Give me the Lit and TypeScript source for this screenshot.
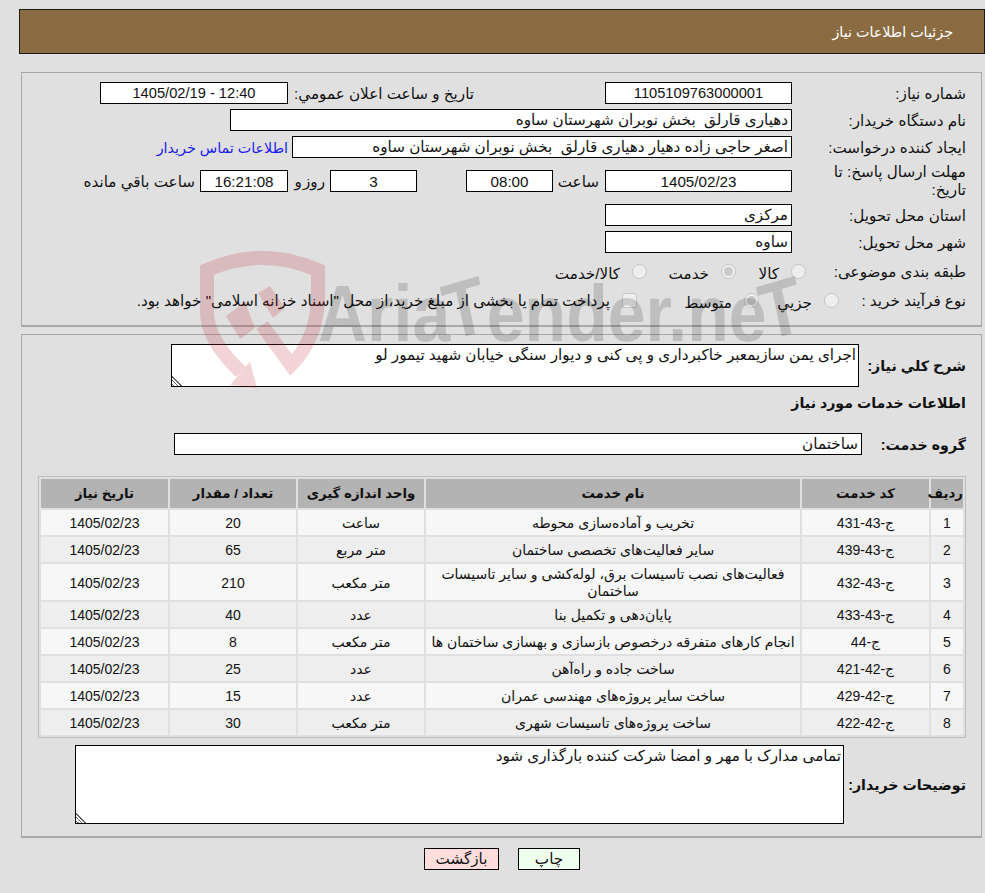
import {LitElement, css, html} from "lit";
import {customElement} from "lit/decorators.js";

const rows = [
  ["1", "ج-43-431", "تخریب و آماده‌سازی محوطه", "ساعت", "20"],
  ["2", "ج-43-439", "سایر فعالیت‌های تخصصی ساختمان", "متر مربع", "65"],
  ["3", "ج-43-432", "فعالیت‌های نصب تاسیسات برق، لوله‌کشی و سایر تاسیسات ساختمان", "متر مکعب", "210"],
  ["4", "ج-43-433", "پایان‌دهی و تکمیل بنا", "عدد", "40"],
  ["5", "ج-44", "انجام کارهای متفرقه درخصوص بازسازی و بهسازی ساختمان ها", "متر مکعب", "8"],
  ["6", "ج-42-421", "ساخت جاده و راه‌آهن", "عدد", "25"],
  ["7", "ج-42-429", "ساخت سایر پروژه‌های مهندسی عمران", "عدد", "15"],
  ["8", "ج-42-422", "ساخت پروژه‌های تاسیسات شهری", "متر مکعب", "30"],
];

@customElement("app-root")
export class AppRoot extends LitElement {
  static styles = css`
    :host {
      display: block;
      position: relative;
      height: 893px;
      overflow: hidden;
      background: #e0e0e0;
      color: #111;
      direction: rtl;
      font-family: "Liberation Sans", "DejaVu Sans", sans-serif;
      font-size: 15.2px;
    }
    .header {
      box-sizing: border-box;
      height: 45px;
      margin: 9px 0 0 19px;
      padding: 0 31px;
      display: flex;
      align-items: center;
      background: #8b6c42;
      border: 1px solid #1a1a1a;
      color: #fff;
      font-size: 14.3px;
    }
    .panel {
      box-sizing: border-box;
      margin: 0 3px 0 21px;
      border: 2px solid #a8a8a8;
      border-width: 1px 1px 2px 1px;
      padding-right: 15px;
    }
    .top {
      margin-top: 18px;
      height: 255px;
      padding-top: 9px;
    }
    .bottom {
      margin-top: 7px;
      height: 504px;
      padding-top: 9px;
    }
    .row {
      display: flex;
      align-items: center;
      height: 22px;
      margin-bottom: 5px;
    }
    .label { width: 174px; flex: none; box-sizing: border-box; padding-top: 2px; }
    .row4 { margin: 12px 0 12px; }
    .row4 .label { line-height: 18px; padding: 0 0 0 30px; }
    input.box {
      box-sizing: border-box;
      height: 22px;
      flex: none;
      margin: 0;
      padding: 0 3px;
      border: 1px solid #000;
      border-radius: 0;
      background: #fff;
      color: #111;
      font: inherit;
      outline: none;
    }
    input.num { font-size: 14.67px; }
    .center { text-align: center; }
    .w187 { width: 187px; }
    .timer { background: #ffffee; }
    .link { color: #1a1aee; margin-right: 4px; padding-top: 2px; font-size: 14.3px; }
    .days { word-spacing: -3px; }
    .choice { height: 24px; margin: 6px 0 0; }
    .choice2 { height: 24px; margin: 5px 0 0; }
    .opt { display: flex; align-items: center; flex: none; }
    .opt input { margin: 0 0 0 12px; width: 15px; height: 15px; flex: none; }
    .opt span { padding-top: 5px; }
    .opt .plain { padding-top: 2px; }
    .desc-row { display: flex; align-items: center; }
    .strong { font-weight: bold; font-size: 14.2px; white-space: nowrap; }
    .desc-label { width: 107px; flex: none; }
    textarea {
      display: block;
      box-sizing: border-box;
      margin: 0;
      padding: 1px 2px;
      border: 1px solid #000;
      border-radius: 0;
      background: #fff;
      color: #111;
      font: inherit;
      outline: none;
    }
    textarea::-webkit-resizer {
      background: linear-gradient(45deg,
        transparent 5%, #666 5% 10%, transparent 10% 17%,
        #666 17% 22%, transparent 22% 29%, #666 29% 34%, transparent 34%);
    }
    .need { width: 688px; height: 43px; }
    .heading { height: 16px; margin: 8px 0 22px; line-height: 16px; }
    .group { height: 22px; margin: 0 0 21px; display: flex; align-items: center; }
    .group .label { width: 104px; }
    .group input { width: 688px; }
    table {
      box-sizing: border-box;
      width: 928px;
      height: 262px;
      border: 1px solid #bdbdbd;
      border-collapse: separate;
      border-spacing: 2px;
      table-layout: fixed;
      font-size: 14px;
    }
    th {
      background: #b3b3b3;
      height: 29px;
      padding: 0;
      font-size: 13.33px;
      font-weight: bold;
      white-space: nowrap;
    }
    td {
      height: 25px;
      padding: 2px 4px 0;
      text-align: center;
      line-height: 17px;
      box-sizing: border-box;
    }
    tbody tr:nth-child(odd) td { background: #f7f7f7; }
    tbody tr:nth-child(even) td { background: #eeeeee; }
    .note-row { margin-top: 7px; }
    .note-label { width: 122px; flex: none; }
    .note { width: 769px; height: 79px; }
    .actions {
      display: flex;
      gap: 19px;
      margin: 10px 0 0 19px;
      padding-right: 405px;
    }
    .actions button {
      box-sizing: border-box;
      height: 22px;
      padding: 0;
      border: 1px solid #000;
      color: #111;
      font: inherit;
    }
    .print { width: 62px; background: #eeffee; }
    .back { width: 75px; background: #ffdddd; }
    .mark {
      position: absolute;
      left: 0;
      top: 0;
      pointer-events: none;
    }
    .mark text {
      font-family: "Liberation Sans", sans-serif;
      font-weight: bold;
      font-size: 80px;
      direction: ltr;
      fill: rgba(0, 0, 0, 0.15);
    }
  `;

  render() {
    return html`
      <div class="header">جزئیات اطلاعات نیاز</div>

      <div class="panel top">
        <div class="row">
          <div class="label">شماره نیاز:</div>
          <input class="box w187 center num" readonly value="1105109763000001" />
          <div class="label" style="width:181px;margin-right:131px">تاریخ و ساعت اعلان عمومي:</div>
          <input class="box center num" style="width:188px;margin-right:5px" readonly value="12:40 - 1405/02/19" />
        </div>
        <div class="row">
          <div class="label">نام دستگاه خریدار:</div>
          <input class="box" style="width:562px" readonly value="دهیاری قارلق  بخش نوبران شهرستان ساوه" />
        </div>
        <div class="row">
          <div class="label">ایجاد کننده درخواست:</div>
          <input class="box" style="width:500px" readonly value="اصغر حاجی زاده دهیار دهیاری قارلق  بخش نوبران شهرستان ساوه" />
          <a class="link">اطلاعات تماس خریدار</a>
        </div>
        <div class="row row4">
          <div class="label">مهلت ارسال پاسخ: تا تاریخ:</div>
          <input class="box w187 center" readonly value="1405/02/23" />
          <div style="width:52px;padding:2px 6px 0 0;box-sizing:border-box;flex:none">ساعت</div>
          <input class="box center" style="width:87px" readonly value="08:00" />
          <input class="box center" style="width:87px;margin-right:49px" readonly value="3" />
          <div class="days" style="margin-right:5px;width:37px;flex:none;padding-top:2px">روز و</div>
          <input class="box center timer" style="width:88px" readonly value="16:21:08" />
          <div style="margin-right:5px;flex:none;padding-top:2px">ساعت باقي مانده</div>
        </div>
        <div class="row">
          <div class="label">استان محل تحویل:</div>
          <input class="box w187" readonly value="مرکزی" />
        </div>
        <div class="row">
          <div class="label">شهر محل تحویل:</div>
          <input class="box w187" readonly value="ساوه" />
        </div>
        <div class="row choice">
          <div class="label" style="width:160px">طبقه بندی موضوعی:</div>
          <div class="opt" style="width:70px"><input type="radio" disabled /><span>کالا</span></div>
          <div class="opt" style="width:89px"><input type="radio" disabled checked /><span>خدمت</span></div>
          <div class="opt"><input type="radio" disabled /><span>کالا/خدمت</span></div>
        </div>
        <div class="row choice2">
          <div class="label" style="width:127px">نوع فرآیند خرید :</div>
          <div class="opt" style="width:80px"><input type="radio" disabled /><span>جزيي</span></div>
          <div class="opt" style="width:122px"><input type="radio" disabled checked /><span>متوسط</span></div>
          <div class="opt"><input type="checkbox" disabled /><span class="plain">پرداخت تمام یا بخشی از مبلغ خرید،از محل "اسناد خزانه اسلامی" خواهد بود.</span></div>
        </div>
      </div>

      <div class="panel bottom">
        <div class="desc-row">
          <div class="desc-label strong">شرح کلي نیاز:</div>
          <textarea class="need" readonly>اجرای یمن سازیمعبر خاکبرداری و پی کنی و دیوار سنگی خیابان شهید تیمور لو</textarea>
        </div>
        <div class="heading strong">اطلاعات خدمات مورد نیاز</div>
        <div class="group">
          <div class="label strong">گروه خدمت:</div>
          <input class="box" readonly value="ساختمان" />
        </div>
        <table>
          <colgroup>
            <col style="width:32px" /><col style="width:127px" /><col style="width:374px" />
            <col style="width:126px" /><col style="width:126px" /><col style="width:127px" />
          </colgroup>
          <thead>
            <tr>
              <th>ردیف</th><th>کد خدمت</th><th>نام خدمت</th>
              <th>واحد اندازه گیری</th><th>تعداد / مقدار</th><th>تاریخ نیاز</th>
            </tr>
          </thead>
          <tbody>
            ${rows.map(r => html`
              <tr>
                <td>${r[0]}</td><td>${r[1]}</td><td>${r[2]}</td>
                <td>${r[3]}</td><td>${r[4]}</td><td>1405/02/23</td>
              </tr>`)}
          </tbody>
        </table>
        <div class="desc-row note-row">
          <div class="note-label strong">توضیحات خریدار:</div>
          <textarea class="note" readonly>تمامی مدارک با مهر و امضا شرکت کننده بارگذاری شود</textarea>
        </div>
      </div>

      <div class="actions">
        <button class="print">چاپ</button>
        <button class="back">بازگشت</button>
      </div>

      <svg class="mark" width="985" height="893" viewBox="0 0 985 893">
        <g fill="rgba(190,40,50,0.2)">
          <path fill="none" stroke="rgba(190,40,50,0.2)" stroke-width="14"
            d="M241 372 Q207 340 207 312 L207 270 Q262 246 318 270 L318 300 Q316 340 291 365 L262 325" />
          <polygon points="250,362 257,388 230,385" />
          <polygon points="258,293 270,286 285,308 273,318" />
          <polygon points="226,316 245,302 255,328 240,339" />
        </g>
        <text transform="translate(318 341) scale(0.85 1)" rotate="0 0 0 0 -14 0 0 0 0 0 0 0 0 -14">AriaTender.neT</text>
      </svg>
    `;
  }
}
